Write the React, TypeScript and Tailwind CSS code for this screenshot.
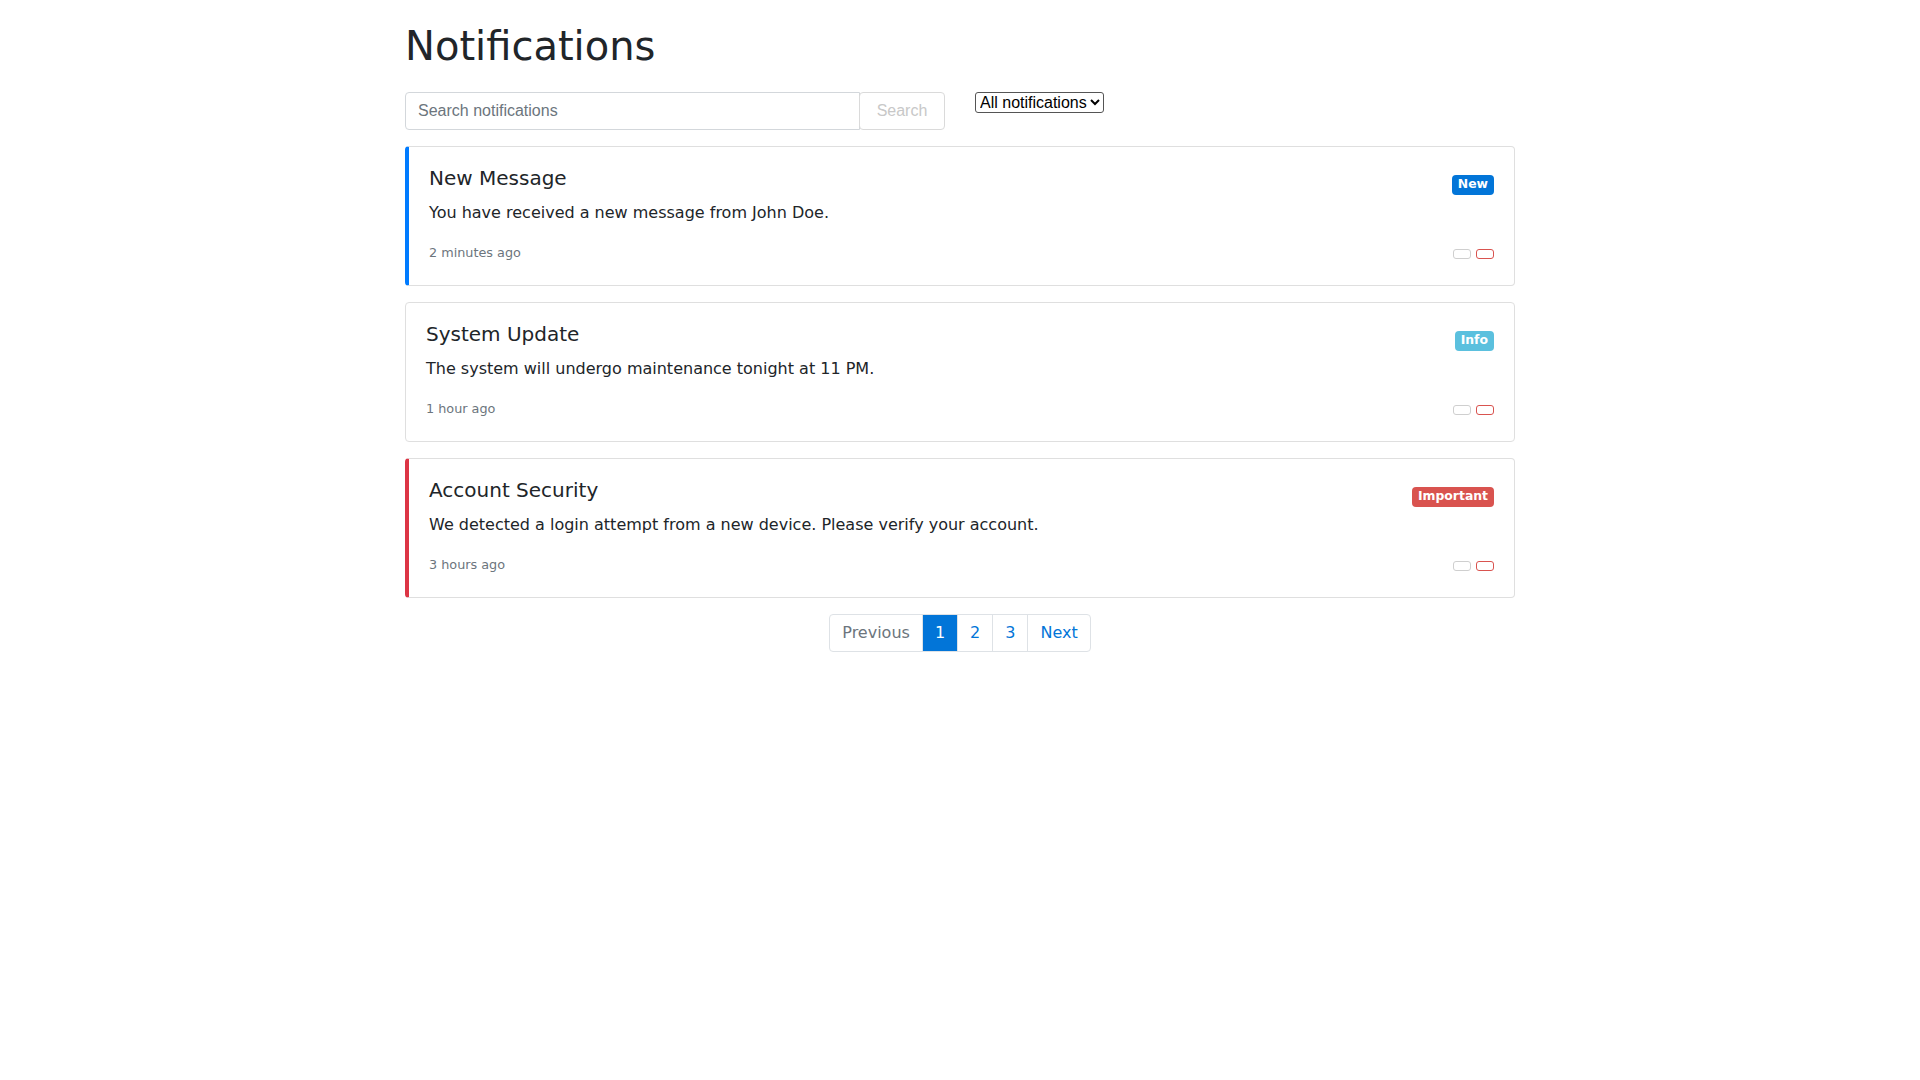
import React from 'react';

type Note = {
  id: number;
  title: string;
  body: string;
  time: string;
  badge: string;
  badgeClass: string;
  accent?: string;
};

const notes: Note[] = [
  {
    id: 1,
    title: 'New Message',
    body: 'You have received a new message from John Doe.',
    time: '2 minutes ago',
    badge: 'New',
    badgeClass: 'bg-[#0275d8]',
    accent: 'border-l-4 border-l-[#007bff]',
  },
  {
    id: 2,
    title: 'System Update',
    body: 'The system will undergo maintenance tonight at 11 PM.',
    time: '1 hour ago',
    badge: 'Info',
    badgeClass: 'bg-[#5bc0de]',
  },
  {
    id: 3,
    title: 'Account Security',
    body: 'We detected a login attempt from a new device. Please verify your account.',
    time: '3 hours ago',
    badge: 'Important',
    badgeClass: 'bg-[#d9534f]',
    accent: 'border-l-4 border-l-[#dc3545]',
  },
];

export default function App() {
  return (
    <div className="min-h-screen bg-white font-['DejaVu_Sans',sans-serif] text-[#212529]">
      <div className="mx-auto w-[1110px]">
        <h1 className="pt-[22px] mb-[22px] text-[40px] leading-[48px] font-normal">
          Notifications
        </h1>

        <div className="flex items-start mb-[16px]">
          <div className="flex">
            <input
              type="text"
              placeholder="Search notifications"
              className="w-[455px] h-[38px] px-3 border border-[#d3d7db] rounded-l-[4px] font-['Liberation_Sans',Arial,sans-serif] text-base placeholder:text-[#6c757d] outline-none"
            />
            <button
              disabled
              className="w-[86px] h-[38px] -ml-px border border-[#dadada] rounded-[4px] font-['Liberation_Sans',Arial,sans-serif] text-base text-[#c8c8c8]"
            >
              Search
            </button>
          </div>
          <select className="ml-[30px] border border-[#555] rounded-[3px] font-['Liberation_Sans',Arial,sans-serif] text-base text-black bg-white">
            <option>All notifications</option>
            <option>Unread</option>
            <option>Read</option>
          </select>
        </div>

        {notes.map((n) => (
          <NoteCard key={n.id} note={n} />
        ))}

        <Pagination />
      </div>
    </div>
  );
}

function NoteCard({ note }: { note: Note }) {
  return (
    <div
      className={`mb-4 border border-[#dfdfdf] rounded-[4px] px-5 pt-[19px] pb-[21px] ${note.accent ?? ''}`}
    >
      <div className="flex justify-between items-center">
        <h5 className="mb-[11px] text-[20px] leading-6 font-normal">{note.title}</h5>
        <span
          className={`h-5 px-[6px] mt-[2px] flex items-center rounded-[4px] text-[12.4px] font-bold text-white ${note.badgeClass}`}
        >
          {note.badge}
        </span>
      </div>
      <p className="mb-[15px] text-base leading-6">{note.body}</p>
      <div className="flex justify-between h-6">
        <small className="self-center text-[12.8px] leading-[19.2px] text-[#6c757d] mt-[1px]">
          {note.time}
        </small>
        <div className="flex gap-[5px] self-end mb-[5px]">
          <button className="w-[18px] h-[10px] border border-[#cfcfcf] rounded-[3px]" />
          <button className="w-[18px] h-[10px] border border-[#d9534f] rounded-[3px]" />
        </div>
      </div>
    </div>
  );
}

function Pagination() {
  const base =
    'h-[38px] px-3 -ml-px border border-[#dee2e6] text-base leading-5 flex items-center';
  return (
    <div className="flex justify-center">
      <span className={`${base} ml-0 rounded-l-[4px] text-[#6c757d] bg-white`}>
        Previous
      </span>
      <span className={`${base} relative z-10 bg-[#0275d8] border-[#0275d8] text-white`}>
        1
      </span>
      <a href="#" className={`${base} text-[#0275d8]`}>
        2
      </a>
      <a href="#" className={`${base} text-[#0275d8]`}>
        3
      </a>
      <a href="#" className={`${base} rounded-r-[4px] text-[#0275d8]`}>
        Next
      </a>
    </div>
  );
}
